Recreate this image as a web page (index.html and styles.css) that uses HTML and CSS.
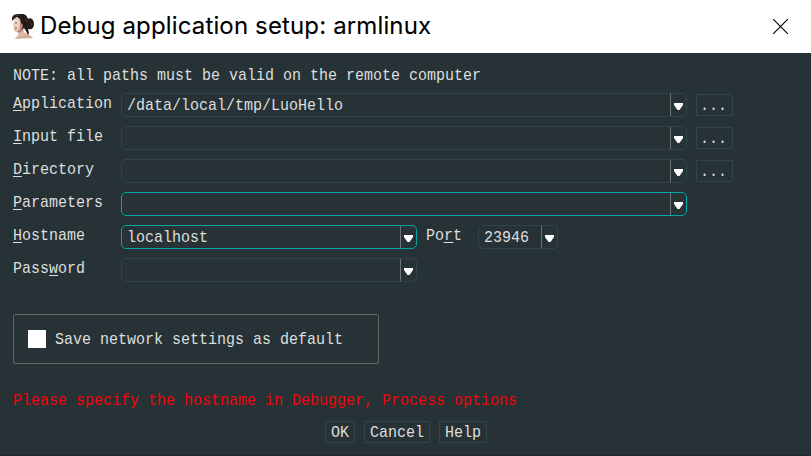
FILE: index.html
```html
<!DOCTYPE html>
<html lang="en">
<head>
<meta charset="utf-8">
<title>Debug application setup: armlinux</title>
<link rel="stylesheet" href="styles.css">
</head>
<body>
<header class="titlebar">
  <svg class="portrait" width="24" height="25" viewBox="0 0 24 25">
    <path d="M4 5 10 3 13 7 12 14 13 18 20 22 22 24H5l3-5-2-1-3-1 0-4-1-2z" fill="#dfbba5"/>
    <path d="M9 8l4 1-1 7-3 3-3-1 3-3z" fill="#b98270"/>
    <path d="M4 6l3-1 2 4-2 7-3-1 0-3-2-1z" fill="#f0d4c3"/>
    <path d="M1 5C1 1 4 0 8 0c5-1 8 1 9 5 3-2 6 1 6 5 0 4-2 6-6 5l1 4-1 2-2-4-2-3-2 2 1-5-2-2-1-4-3-2-3 2-2 2z" fill="#241b1a"/>
    <path d="M4 2l5-1M14 4l2 4M19 9l2 2" stroke="#554039" stroke-width=".8"/>
    <path d="M4 9h2M4 14h2" stroke="#825247" stroke-width="1"/>
    <path d="M3 25l5-3 9-1 5 3z" fill="#cfae9c"/>
  </svg>
  <h1 class="title">Debug application setup: armlinux</h1>
  <svg class="close" width="15" height="15" viewBox="0 0 15 15"><path d="M0 0l15 15M15 0L0 15" stroke="#000" stroke-width="1.1"/></svg>
</header>
<main class="dialog">
  <p class="note"><span class="t">NOTE: all paths must be valid on the remote computer</span></p>
  <div class="row">
    <label class="label"><span class="t"><u>A</u>pplication</span></label>
    <div class="combo wide"><span class="value"><span class="t">/data/local/tmp/LuoHello</span></span><span class="drop"><svg class="arrow" viewBox="0 0 9 7"><path d="M0 0h9v2L5.500 7h-2L0 2z"/></svg></span></div>
    <button class="button browse"><span class="t">...</span></button>
  </div>
  <div class="row">
    <label class="label"><span class="t"><u>I</u>nput file</span></label>
    <div class="combo wide"><span class="value"></span><span class="drop"><svg class="arrow" viewBox="0 0 9 7"><path d="M0 0h9v2L5.500 7h-2L0 2z"/></svg></span></div>
    <button class="button browse"><span class="t">...</span></button>
  </div>
  <div class="row">
    <label class="label"><span class="t"><u>D</u>irectory</span></label>
    <div class="combo wide"><span class="value"></span><span class="drop"><svg class="arrow" viewBox="0 0 9 7"><path d="M0 0h9v2L5.500 7h-2L0 2z"/></svg></span></div>
    <button class="button browse"><span class="t">...</span></button>
  </div>
  <div class="row">
    <label class="label"><span class="t"><u>P</u>arameters</span></label>
    <div class="combo wide active"><span class="value"></span><span class="drop"><svg class="arrow" viewBox="0 0 9 7"><path d="M0 0h9v2L5.500 7h-2L0 2z"/></svg></span></div>
  </div>
  <div class="row">
    <label class="label"><span class="t"><u>H</u>ostname</span></label>
    <div class="combo medium active"><span class="value"><span class="t">localhost</span></span><span class="drop"><svg class="arrow" viewBox="0 0 9 7"><path d="M0 0h9v2L5.500 7h-2L0 2z"/></svg></span></div>
    <label class="label port"><span class="t">Po<u>r</u>t</span></label>
    <div class="combo small"><span class="value"><span class="t">23946</span></span><span class="drop"><svg class="arrow" viewBox="0 0 9 7"><path d="M0 0h9v2L5.500 7h-2L0 2z"/></svg></span></div>
  </div>
  <div class="row">
    <label class="label"><span class="t">Pass<u>w</u>ord</span></label>
    <div class="combo medium"><span class="value"></span><span class="drop"><svg class="arrow" viewBox="0 0 9 7"><path d="M0 0h9v2L5.500 7h-2L0 2z"/></svg></span></div>
  </div>
  <div class="group"><span class="checkbox"></span><span class="t">Save network settings as default</span></div>
  <p class="error"><span class="t">Please specify the hostname in Debugger, Process options</span></p>
  <footer class="actions">
    <button class="button ok"><span class="t">OK</span></button>
    <button class="button cancel"><span class="t">Cancel</span></button>
    <button class="button help"><span class="t">Help</span></button>
  </footer>
</main>
</body>
</html>
```
FILE: styles.css
```css
* { box-sizing: border-box; }
body { margin: 0; width: 811px; height: 456px; overflow: hidden; background: #263238; }
.titlebar { display: flex; align-items: center; height: 53px; padding: 0 23px 1px 11px; background: #fff; }
.portrait { flex: none; }
.title { margin: 0 auto 0 5px; font: 400 24px/30px Inter, sans-serif; letter-spacing: .14px; color: #000; white-space: nowrap; -webkit-text-stroke: .1px #000; }
.close { flex: none; }
.dialog { height: 403px; padding: 11px 13px 0; color: #dedede; font: 17px/22px "Liberation Mono", monospace; border-bottom: 1px solid #1d282d; background: #263236; }
/* Condensed face: each character occupies a 9px cell. */
.t { display: inline-block; line-height: 24px; white-space: pre; transform: scaleX(.8824); transform-origin: 0 50%; }
.t u { text-decoration: none; display: inline-block; height: 19px; border-bottom: 1px solid #dedede; vertical-align: top; }
.note { margin: 0 0 7px; height: 22px; }
.row { display: flex; height: 24px; margin-bottom: 9px; }
.label { flex: none; width: 108px; height: 22px; margin-top: -1px; }
.combo { display: flex; flex: none; height: 24px; border: 1px solid #304549; border-radius: 5px; }
.combo.active { border-color: #03a5a5; }
.wide { width: 566px; }
.medium { width: 296px; }
.small { width: 80px; }
.value { flex: 1; min-width: 0; padding-left: 5px; }
.drop { display: flex; align-items: center; justify-content: center; width: 16px; border-left: 1px solid #707273; padding-top: 3px; }
.arrow { width: 9px; height: 7px; margin-top: -1px; fill: #fff; }
.button { display: block; height: 22px; padding: 0 0 0 5px; border: 1px solid #30464a; border-radius: 1px; background: transparent; color: inherit; font: inherit; line-height: 20px; text-align: left; }
.button .t { line-height: 20px; padding-top: 1px; margin-bottom: -1px; }
.browse { width: 37px; margin: 1px 0 0 9px; padding-left: 3px; }
.label.port { width: 52px; margin-left: 9px; }
.group { display: flex; align-items: center; width: 366px; height: 50px; margin-top: 32px; padding-left: 14px; border: 1px solid #656767; border-radius: 2px; }
.group .t { padding-top: 1px; }
.checkbox { flex: none; width: 18px; height: 18px; margin-right: 9px; background: #fff; }
.error { height: 22px; margin: 25px 0 10px; color: #f20309; }
.actions { display: flex; gap: 9px; margin-left: 312px; }
.ok { width: 30px; }
.cancel { width: 66px; }
.help { width: 48px; }
```
